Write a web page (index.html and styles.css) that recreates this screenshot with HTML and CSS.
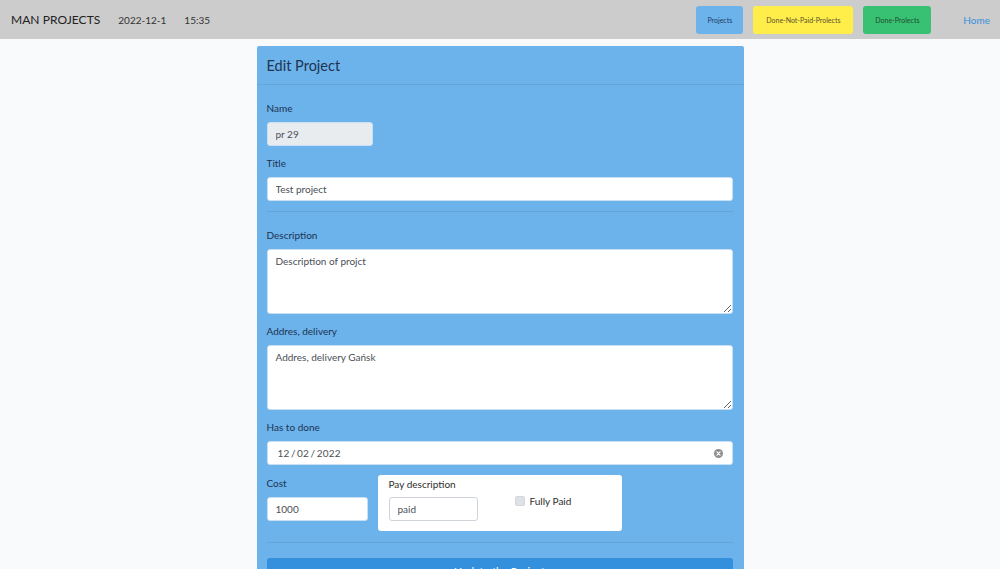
FILE: index.html
```html
<!DOCTYPE html>
<html lang="en">
<head>
<meta charset="utf-8">
<title>Edit Project</title>
<link rel="stylesheet" href="styles.css">
</head>
<body>
<nav class="topbar">
  <div class="brand">MAN PROJECTS</div>
  <div class="stamp">2022-12-1</div>
  <div class="stamp">15:35</div>
  <div class="spacer"></div>
  <div class="navbtns">
    <a class="nbtn nbtn-info">Projects</a>
    <a class="nbtn nbtn-warn">Done-Not-Paid-Prolects</a>
    <a class="nbtn nbtn-ok">Done-Prolects</a>
  </div>
  <a class="home">Home</a>
</nav>
<main class="page">
  <section class="card">
    <header class="card-head">Edit Project</header>
    <div class="card-body">
      <div class="field">
        <label class="lbl">Name</label>
        <input class="ctl ctl-ro ctl-name" type="text" value="pr 29" readonly>
      </div>
      <div class="field">
        <label class="lbl">Title</label>
        <input class="ctl" type="text" value="Test project">
      </div>
      <hr class="sep">
      <div class="field field-first">
        <label class="lbl">Description</label>
        <textarea class="ctl ctl-area">Description of projct</textarea>
      </div>
      <div class="field">
        <label class="lbl">Addres, delivery</label>
        <textarea class="ctl ctl-area">Addres, delivery Gańsk</textarea>
      </div>
      <div class="field">
        <label class="lbl">Has to done</label>
        <div class="ctl ctl-date">
          <span class="date-val">12&thinsp;/&thinsp;02&thinsp;/&thinsp;2022</span>
          <svg class="clear-ico" width="9" height="9" viewBox="0 0 10 10"><circle cx="5" cy="5" r="5" fill="#8e8e8e"/><path d="M3.2 3.2 6.8 6.8M6.8 3.2 3.2 6.8" stroke="#fff" stroke-width="1.3" stroke-linecap="round"/></svg>
        </div>
      </div>
      <div class="row">
        <div class="col-cost">
          <label class="lbl">Cost</label>
          <input class="ctl ctl-cost" type="text" value="1000">
        </div>
        <div class="paybox">
          <div class="pay-left">
            <label class="lbl lbl-dark">Pay description</label>
            <input class="ctl ctl-pay" type="text" value="paid">
          </div>
          <div class="pay-check">
            <span class="chk"></span>
            <span class="chk-lbl">Fully Paid</span>
          </div>
        </div>
      </div>
      <hr class="sep sep-bottom">
      <button class="submit">Update the Project</button>
    </div>
  </section>
</main>
</body>
</html>
```
FILE: styles.css
```css
* { box-sizing: border-box; }
html, body { margin: 0; padding: 0; }
body {
  background: #f8fafc;
  font-family: "Lato", "Noto Sans", sans-serif;
  color: #212529;
  height: 569px;
  overflow: hidden;
}
.topbar {
  height: 39px;
  background: #cccccc;
  display: flex;
  align-items: center;
  padding: 0 10px 0 11px;
}
.brand {
  font-size: 12px;
  color: #222;
  letter-spacing: 0.05px;
  margin-right: 18px;
}
.stamp {
  font-size: 10px;
  color: #333;
  margin-right: 18px;
}
.spacer { flex: 1; }
.navbtns {
  display: flex;
  gap: 10px;
  margin-right: 32px;
}
.nbtn {
  height: 28px;
  display: flex;
  align-items: center;
  justify-content: center;
  font-size: 7px;
  border-radius: 3px;
  color: #2b3a4a;
}
.nbtn-info { background: #6cb2eb; width: 47px; color: #1f3f63; }
.nbtn-warn { background: #ffed4a; width: 100px; color: #5a5230; }
.nbtn-ok { background: #38c172; width: 68px; color: #1f4d30; }
.home {
  font-size: 10px;
  color: #3490dc;
}
.page {
  padding-top: 7px;
  display: flex;
  justify-content: center;
}
.card {
  width: 487px;
  background: #6cb2eb;
  border-radius: 2px 2px 0 0;
}
.card-head {
  height: 39px;
  padding: 0 10px;
  display: flex;
  align-items: center;
  font-size: 14.5px;
  color: #1f3550;
  border-bottom: 1px solid rgba(0, 0, 0, 0.07);
}
.card-body {
  padding: 16px 11px 0 10px;
}
.field { margin-bottom: 10px; }
.field-first { margin-top: 16px; }
.lbl {
  display: block;
  font-size: 10px;
  line-height: 15px;
  margin-bottom: 6px;
  color: #1c3250;
}
.ctl {
  display: block;
  width: 100%;
  height: 24px;
  border: 1px solid #c9dff3;
  border-radius: 3px;
  background: #fff;
  font-family: inherit;
  font-size: 10px;
  color: #495057;
  padding: 0 8px;
  outline: none;
}
.ctl-ro { background: #e9ecef; }
.ctl-name { width: 106px; }
.ctl-area {
  height: 65px;
  padding: 4px 8px;
  resize: vertical;
  line-height: 1.4;
}
.ctl-date {
  display: flex;
  align-items: center;
  justify-content: space-between;
  padding: 0 9px 0 10px;
}
.date-val { letter-spacing: 0.2px; }
.clear-ico { display: block; }
.sep {
  border: 0;
  border-top: 1px solid rgba(0, 0, 0, 0.07);
  margin: 10px 0 0 0;
}
.row {
  display: flex;
  align-items: flex-start;
  gap: 10px;
}
.col-cost { padding-top: 1px; }
.ctl-cost { width: 101px; }
.paybox {
  width: 244px;
  height: 56px;
  background: #fff;
  border-radius: 3px;
  display: flex;
  padding: 2px 11px 10px 11px;
}
.pay-left { width: 126px; }
.lbl-dark { color: #2d2d2d; margin-bottom: 5px; }
.ctl-pay {
  width: 89px;
  border: 1px solid #ced4da;
}
.pay-check {
  display: flex;
  align-items: center;
  gap: 5px;
  height: 20px;
  margin-top: 14px;
}
.chk {
  width: 10px;
  height: 10px;
  border-radius: 2px;
  background: #dee2e6;
  border: 1px solid #d3d7dc;
}
.chk-lbl { font-size: 10px; color: #2d2d2d; }
.sep-bottom { margin-top: 11px; }
.submit {
  display: block;
  width: 100%;
  margin-top: 15px;
  height: 30px;
  border: 0;
  border-radius: 3px;
  background: #3490dc;
  color: #fff;
  font-family: inherit;
  font-size: 11px;
  line-height: 14px;
  padding: 7px 0 9px;
}
```
